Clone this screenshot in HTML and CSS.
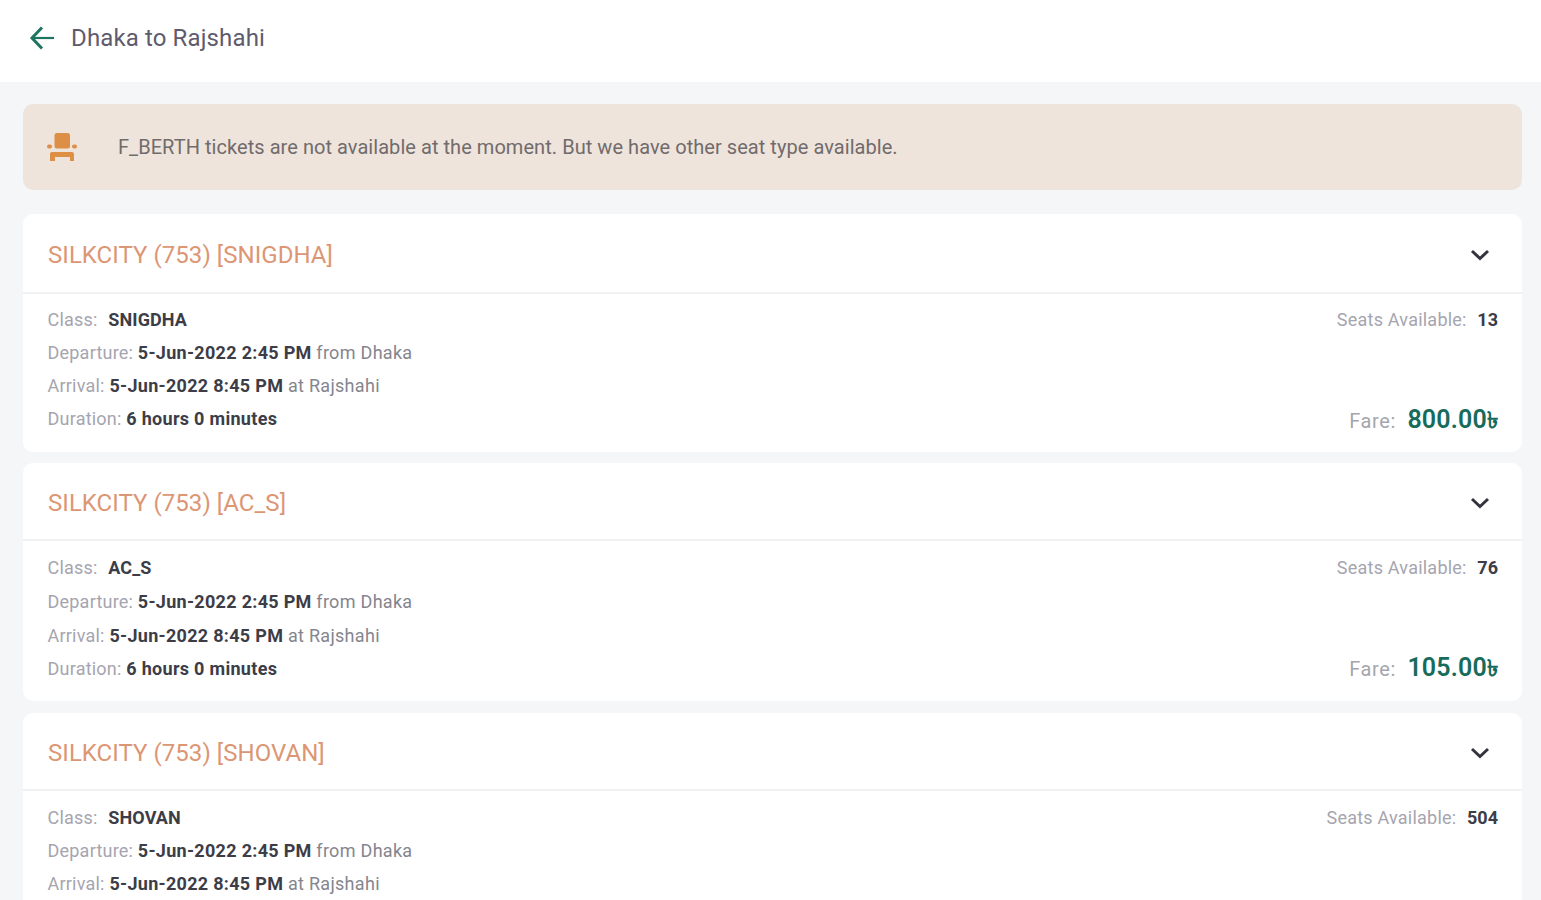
FILE: index.html
```html
<!DOCTYPE html>
<html lang="en">
<head>
  <meta charset="UTF-8" />
  <meta name="viewport" content="width=device-width, initial-scale=1.0"/>
  <title>Dhaka to Rajshahi</title>
  <link rel="stylesheet" href="styles.css">
</head>
<body>
  <header class="topbar">
    <svg class="back" width="26" height="26" viewBox="0 0 26 26">
      <path class="shaft" d="M25 13H3" />
      <path d="M13 2.5L3 13l10 10.5" />
    </svg>
    <h1 class="route">Dhaka to Rajshahi</h1>
  </header>

  <main class="content">
    <div class="notice">
      <svg class="seat" width="32" height="30" viewBox="0 0 32 30">
        <rect x="8.5" y="1" width="15.5" height="15.5" rx="2.5" />
        <rect x="1" y="12.5" width="5" height="4" rx="2" />
        <rect x="26" y="12.5" width="5" height="4" rx="2" />
        <path d="M6 20h20a2 2 0 0 1 2 2v7h-4v-4H9v4H4v-7a2 2 0 0 1 2-2z" />
      </svg>
      <p class="notice-text">F_BERTH tickets are not available at the moment. But we have other seat type available.</p>
    </div>

    <section class="train first">
      <div class="train-head">
        <h2 class="train-name">SILKCITY (753) [SNIGDHA]</h2>
        <svg class="chevron" width="20" height="12" viewBox="0 0 20 12"><path d="M2 2l8 7.5L18 2" /></svg>
      </div>
      <div class="train-body">
        <div class="details">
          <p class="row class-row">Class: <b>SNIGDHA</b></p>
          <p class="row departure">Departure: <b>5-Jun-2022 2:45 PM</b> <span>from Dhaka</span></p>
          <p class="row arrival">Arrival: <b>5-Jun-2022 8:45 PM</b> <span>at Rajshahi</span></p>
          <p class="row duration">Duration: <b>6 hours 0 minutes</b></p>
        </div>
        <div class="side">
          <p class="row seats">Seats Available: <b>13</b></p>
          <p class="fare">Fare: <b>800.00<span class="taka">৳</span></b></p>
        </div>
      </div>
    </section>

    <section class="train second">
      <div class="train-head">
        <h2 class="train-name">SILKCITY (753) [AC_S]</h2>
        <svg class="chevron" width="20" height="12" viewBox="0 0 20 12"><path d="M2 2l8 7.5L18 2" /></svg>
      </div>
      <div class="train-body">
        <div class="details">
          <p class="row class-row">Class: <b>AC_S</b></p>
          <p class="row departure">Departure: <b>5-Jun-2022 2:45 PM</b> <span>from Dhaka</span></p>
          <p class="row arrival">Arrival: <b>5-Jun-2022 8:45 PM</b> <span>at Rajshahi</span></p>
          <p class="row duration">Duration: <b>6 hours 0 minutes</b></p>
        </div>
        <div class="side">
          <p class="row seats">Seats Available: <b>76</b></p>
          <p class="fare">Fare: <b>105.00<span class="taka">৳</span></b></p>
        </div>
      </div>
    </section>

    <section class="train last">
      <div class="train-head">
        <h2 class="train-name">SILKCITY (753) [SHOVAN]</h2>
        <svg class="chevron" width="20" height="12" viewBox="0 0 20 12"><path d="M2 2l8 7.5L18 2" /></svg>
      </div>
      <div class="train-body">
        <div class="details">
          <p class="row class-row">Class: <b>SHOVAN</b></p>
          <p class="row departure">Departure: <b>5-Jun-2022 2:45 PM</b> <span>from Dhaka</span></p>
          <p class="row arrival">Arrival: <b>5-Jun-2022 8:45 PM</b> <span>at Rajshahi</span></p>
        </div>
        <div class="side">
          <p class="row seats">Seats Available: <b>504</b></p>
        </div>
      </div>
    </section>
  </main>
</body>
</html>
```

FILE: styles.css
```css
* {
  box-sizing: border-box;
}
body {
  margin: 0;
  background: #f4f6f8;
  color: #5c5c68;
  font-family: Roboto, "Noto Sans", sans-serif;
}
h1, h2, p {
  margin: 0;
  font-weight: 400;
  white-space: nowrap;
}
.topbar {
  display: flex;
  align-items: center;
  gap: 16px;
  height: 82px;
  padding: 0 29px 7px;
  background: #fff;
}
.back {
  fill: none;
  stroke: #1d7560;
  stroke-width: 3;
}
.shaft {
  stroke-width: 2.2;
}
.route {
  font-size: 24px;
  line-height: 30px;
  letter-spacing: 0.13px;
  color: #5f5b6e;
}
.content {
  padding: 22px 19px 0 23px;
}
.notice {
  display: flex;
  align-items: center;
  gap: 40px;
  height: 86px;
  margin-bottom: 24px;
  padding: 0 23px;
  border-radius: 10px;
  background: #eee4db;
}
.seat {
  fill: #dc8f45;
}
.notice-text {
  font-size: 20px;
  letter-spacing: 0.05px;
  color: #716b6c;
}
.train {
  height: 238px;
  margin-bottom: 12px;
  border-radius: 10px;
  background: #fff;
}
.train-head {
  display: flex;
  align-items: center;
  justify-content: space-between;
  height: 78px;
  padding: 4px 32px 0 25px;
  border-bottom: 2px solid #f0f1f3;
}
.train-name {
  font-size: 24px;
  letter-spacing: 0.05px;
  color: #dc9674;
}
.chevron {
  fill: none;
  stroke: #34343f;
  stroke-width: 3;
}
.train-body {
  display: flex;
  justify-content: space-between;
  padding: 10px 24px 0 24.5px;
}
.first {
  margin-bottom: 11px;
}
.first .train-head {
  height: 80px;
  padding-top: 3px;
}
.first .train-body {
  padding-top: 9px;
}
.second .departure {
  margin-top: 1px;
}
.second .arrival {
  margin-top: 1px;
}
.second .side {
  margin-bottom: 2px;
}
.last {
  height: 187px;
  margin-bottom: 0;
  border-radius: 10px 10px 0 0;
}
.row {
  font-size: 18px;
  line-height: 33px;
  letter-spacing: 0.22px;
  color: #a5a5af;
}
.row b {
  font-weight: 700;
  letter-spacing: 0.3px;
  color: #3c3d47;
}
.row span {
  letter-spacing: 0.3px;
  color: #85858f;
}
.class-row b,
.seats b {
  margin-left: 6px;
  letter-spacing: 0;
}
.class-row b {
  letter-spacing: 0.1px;
}
.side {
  display: flex;
  flex-direction: column;
  justify-content: space-between;
  text-align: right;
}
.fare {
  position: relative;
  top: 3px;
  font-size: 20px;
  line-height: 33px;
  letter-spacing: 0.6px;
  color: #a5a5af;
}
.fare b {
  margin-left: 6px;
  font-size: 25px;
  font-weight: 600;
  letter-spacing: 0.15px;
  color: #176b5c;
}
.taka {
  font-size: 23px;
  line-height: 1;
}
```
